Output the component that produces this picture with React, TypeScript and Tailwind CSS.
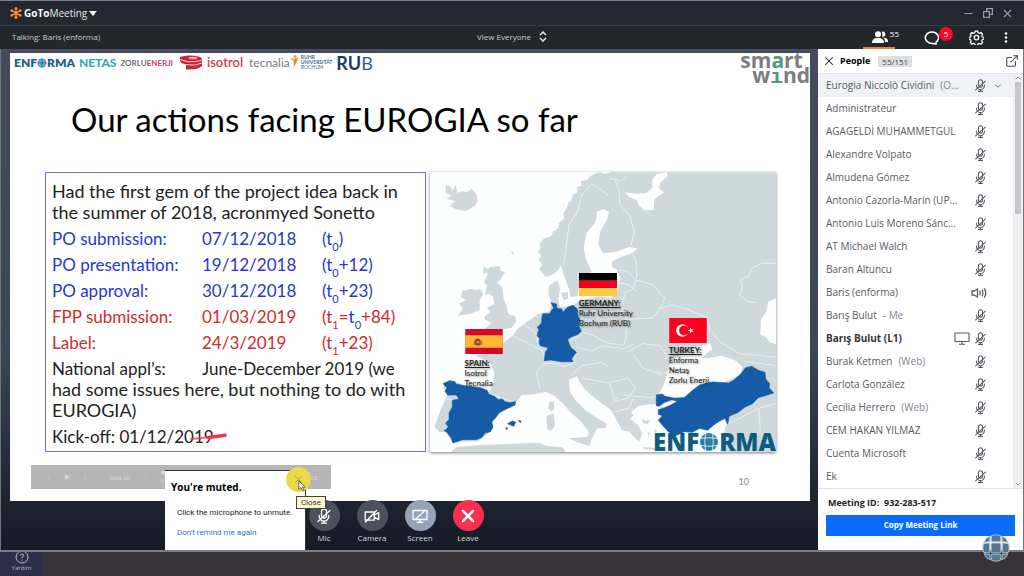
import { useState, type ReactNode } from 'react';
import { X, Minus, ChevronDown, ChevronUp, ChevronLeft, ChevronRight, Play, ExternalLink } from 'lucide-react';

type Person = {
    name: string;
    suffix?: string;
    talking?: boolean;
    sharing?: boolean;
    active?: boolean;
};

const people: Person[] = [
    { name: 'Eurogia Niccolò Cividini', suffix: '(O...', active: true },
    { name: 'Administrateur' },
    { name: 'AGAGELDİ MUHAMMETGUL' },
    { name: 'Alexandre Volpato' },
    { name: 'Almudena Gómez' },
    { name: 'Antonio Cazorla-Marín (UP...' },
    { name: 'Antonio Luis Moreno Sánc...' },
    { name: 'AT Michael Walch' },
    { name: 'Baran Altuncu' },
    { name: 'Baris (enforma)', talking: true },
    { name: 'Barış Bulut', suffix: '- Me' },
    { name: 'Barış Bulut (L1)', sharing: true },
    { name: 'Burak Ketmen', suffix: '(Web)' },
    { name: 'Carlota González' },
    { name: 'Cecilia Herrero', suffix: '(Web)' },
    { name: 'CEM HAKAN YILMAZ' },
    { name: 'Cuenta Microsoft' },
    { name: 'Ek' },
];

function MicMuted({ className }: { className?: string }) {
    return (
        <svg viewBox="0 0 16 16" className={className} fill="none" stroke="currentColor" strokeWidth="1.3" strokeLinecap="round">
            <rect x="5.5" y="1" width="5" height="9" rx="2.5" />
            <path d="M3.2 7.5v.8a4.8 4.8 0 0 0 9.6 0v-.8M8 13v2M5.5 15.2h5M2 13.5 14 2.5" />
        </svg>
    );
}

function CameraOff({ className }: { className?: string }) {
    return (
        <svg viewBox="0 0 16 16" className={className} fill="none" stroke="currentColor" strokeWidth="1.3" strokeLinejoin="round" strokeLinecap="round">
            <path d="M1.2 4h9v8.2h-9zM10.2 7.2l4.5-2.6v7l-4.5-2.6M1.5 14 12.5 2.5" />
        </svg>
    );
}

function ScreenOff({ className }: { className?: string }) {
    return (
        <svg viewBox="0 0 16 16" className={className} fill="none" stroke="currentColor" strokeWidth="1.3" strokeLinejoin="round" strokeLinecap="round">
            <path d="M1 2.5h14v9H1zM8 11.5v2.7M5 14.3h6M3.5 11.2 12.5 3" />
        </svg>
    );
}

function Monitor({ className }: { className?: string }) {
    return (
        <svg viewBox="0 0 16 13" className={className} fill="none" stroke="currentColor" strokeWidth="1.1" strokeLinejoin="round">
            <path d="M1 1h14v8.5H1zM8 9.5V12M5 12.2h6" />
        </svg>
    );
}

function Speaker({ className }: { className?: string }) {
    return (
        <svg viewBox="0 0 16 12" className={className} fill="none" stroke="currentColor" strokeWidth="1.3" strokeLinejoin="round" strokeLinecap="round">
            <path d="M1 4h2.200L6.500 2v8L3.200 8H1zM9 4.200v3.600M11.300 3.200c.7 1.700.7 3.900 0 5.600M13.500 1.800c1.500 2.500 1.500 5.900 0 8.400" />
        </svg>
    );
}

function Gear({ className }: { className?: string }) {
    return (
        <svg viewBox="0 0 24 24" className={className} fill="none" stroke="currentColor" strokeWidth="2" strokeLinejoin="round">
            <path d="M10 1.500h4l.8 3 2 .9 2.800-1.500 2.700 2.700-1.500 2.800.8 2 3 .8v0l0 0-.1 3-2.900.8-.8 2 1.500 2.800-2.700 2.700-2.800-1.500-2 .8-.8 2.700h-4l-.8-2.700-2-.8-2.800 1.500-2.700-2.700 1.500-2.800-.8-2-2.900-.8 0-3.200 3-.8.7-1.800-1.500-2.800 2.700-2.700 2.800 1.500 2-.9z" transform="translate(.4 .2) scale(.96)" />
            <circle cx="12" cy="12" r="3.600" />
        </svg>
    );
}

function Globe({ className }: { className?: string }) {
    return (
        <svg viewBox="0 0 40 40" className={className}>
            <circle cx="20" cy="20" r="18" fill="currentColor" />
            <path d="M2 13q18-3 36 0M2 27q18 3 36 0M13 2q-3 18 0 36M27 2q3 18 0 36" fill="none" stroke="#ffffff" strokeOpacity=".75" strokeWidth="2" />
        </svg>
    );
}

// ball built from nine rounded tiles, sits over the taskbar edge
function Watermark() {
    return (
        <svg viewBox="0 0 40 40" className="h-7 w-7">
            <g fill="#527793" stroke="#b9c9d5" strokeWidth="1.200">
                <path d="M12 3q-7 2-9 9 4-1 8-1 0-4 1-8zM28 3q7 2 9 9-4-1-8-1 0-4-1-8zM12 37q-7-2-9-9 4 1 8 1 0 4 1 8zM28 37q7-2 9-9-4 1-8 1 0 4-1 8z" />
                <path d="M14 2q6-1.500 12 0 1 4 1 9H13q0-5 1-9zM14 38q6 1.500 12 0 1-4 1-9H13q0 5 1 9zM2 14q-1.500 6 0 12 4 1 9 1V13q-5 0-9 1zM38 14q1.500 6 0 12-4 1-9 1V13q5 0 9 1z" />
                <rect x="13" y="13" width="14" height="14" rx="2" />
            </g>
        </svg>
    );
}

function Flower() {
    return (
        <svg viewBox="0 0 20 20" className="h-3 w-3" stroke="#f68d2e" strokeWidth="2.600" strokeLinecap="round">
            <path d="M10 10V2M10 10v8M10 10 3 6M10 10l7 4M10 10l7-4M10 10l-7 4" />
            <g fill="#f68d2e" stroke="none">
                <circle cx="10" cy="2.500" r="2.300" />
                <circle cx="10" cy="17.500" r="2.300" />
                <circle cx="3" cy="6" r="2.300" />
                <circle cx="17" cy="6" r="2.300" />
                <circle cx="3" cy="14" r="2.300" />
                <circle cx="17" cy="14" r="2.300" />
            </g>
        </svg>
    );
}

function TitleBar() {
    return (
        <header className="flex h-[26px] items-center justify-between border-t border-b border-t-[#7b7e84] border-b-[#3a3d46] bg-[#23272f] px-2.5 text-white">
            <button className="flex items-center gap-0.5 text-[10px]">
                <Flower />
                <span className="text-gray-200"><b className="text-white">GoTo</b>Meeting</span>
                <svg viewBox="0 0 8 5" className="h-[5px] w-[8px]"><path d="M0 0h8L4 5z" fill="#fff" /></svg>
            </button>
            <div className="flex items-center gap-2 text-[#9a9da3]">
                <button aria-label="Minimize"><Minus size={13} strokeWidth={2} /></button>
                <button aria-label="Restore">
                    <svg viewBox="0 0 10 10" className="h-[10px] w-[10px]" fill="none" stroke="currentColor" strokeWidth="1.2">
                        <path d="M.6 3.600h5.800v5.800H.600zM3.600 3.500V.6h5.800v5.800H6.500" />
                    </svg>
                </button>
                <button aria-label="Close window"><X size={13} strokeWidth={2} /></button>
            </div>
        </header>
    );
}

function StatusBar() {
    return (
        <div className="grid h-[23px] grid-cols-[1fr_auto_1fr] items-center bg-[#23272d] px-3 text-[8px] leading-[21px] text-[#c9cbd0]">
            <span className="pb-0.5">Talking: Baris (enforma)</span>
            <button className="flex items-center gap-2 pb-0.5">
                View Everyone
                <svg viewBox="0 0 8 11" className="h-[11px] w-[8px]" fill="none" stroke="#e5e5e5" strokeWidth="1.500">
                    <path d="M1 4l3-3 3 3M1 7l3 3 3-3" />
                </svg>
            </button>
            <div className="flex h-full items-center justify-end pr-1 text-white">
                <button aria-label="People" className="flex h-full w-8 items-center justify-end border-b-2 border-[#e08440]">
                    <svg viewBox="0 0 16 12" className="h-[12px] w-[16px] shrink-0" fill="currentColor">
                        <circle cx="6" cy="3.200" r="3" />
                        <path d="M0 12c0-4 2.500-5 6-5s6 1 6 5z" />
                        <path d="M9.500.7a2.700 2.700 0 1 1 .3 5A5 5 0 0 0 9.500.7zM12 6.600c2.600.3 4 1.500 4 4.400h-3c0-2-.3-3.300-1.600-4.300z" />
                    </svg>
                    <span className="-mr-1 ml-0.5 pb-1.5 leading-3">55</span>
                </button>
                <button aria-label="Chat" className="mr-4 ml-7 flex items-center">
                    <svg viewBox="0 0 16 14" className="h-[14px] w-[16px]" fill="none" stroke="currentColor" strokeWidth="1.500">
                        <path d="M13 11.200A6.600 5.700 0 1 0 9 12.400l4.200.5z" strokeLinejoin="round" />
                    </svg>
                    <span className="mb-2 flex h-[14px] w-[14px] items-center justify-center rounded-full bg-[#fa0a2a]">5</span>
                </button>
                <button aria-label="Settings" className="mr-5"><Gear className="h-[15px] w-[15px]" /></button>
                <button aria-label="More">
                    <svg viewBox="0 0 4 12" className="h-[11px] w-[4px]" fill="currentColor">
                        <circle cx="2" cy="1.700" r="1.400" />
                        <circle cx="2" cy="6" r="1.400" />
                        <circle cx="2" cy="10.300" r="1.400" />
                    </svg>
                </button>
            </div>
        </div>
    );
}

function Enforma({ big = false }: { big?: boolean }) {
    return (
        <span className={`flex items-center leading-none font-extrabold ${big ? 'text-[24px] text-[#0d5c82]' : 'text-[12px] text-[#1b5f8c]'}`}>
            ENF
            <Globe className={big ? 'h-5 w-5 text-[#2a7fa8]' : 'h-[10px] w-[10px] text-[#2a7fa8]'} />
            RMA
        </span>
    );
}

function Partners() {
    return (
        <div className="flex h-9 items-start justify-between pl-1">
            <div className="flex h-[19px] items-center">
                <Enforma />
                <span className="ml-1 text-[12px] font-bold text-[#1aa7b3]">NETAS</span>
                <span className="ml-1 text-[8px] font-bold text-[#6d6e71]">ZORLU<span className="text-[#d0416f]">ENERJI</span></span>
                <svg viewBox="0 0 24 15" className="ml-1.5 h-[15px] w-6">
                    <path d="M1 2q5-2 11-1.500Q23 1 23 4v7q-4 4-16 3.500V9Q1 9 1 5z" fill="#cf2338" />
                    <path d="M1 4.500Q9 8 17 6.500T23 4M7 9.500q9 2 16-1.500" fill="none" stroke="#fff" strokeWidth=".8" />
                    <ellipse cx="14" cy="3" rx="4.500" ry="1.300" fill="#f1a6ae" />
                </svg>
                <span className="ml-1 text-[13px] font-semibold text-[#d63a51]">isotrol</span>
                <span className="ml-1.5 text-[12px] text-[#77787b]">tecnalia</span>
                <svg viewBox="0 0 9 15" className="h-[15px] w-[9px]">
                    <path d="M0 3q5 2 8-1-1 6-5 12 2-7 0-9-2 0-3-2z" fill="#f08a1d" />
                    <circle cx="5" cy="1.500" r="1.300" fill="#f08a1d" />
                </svg>
                <span className="ml-0.5 text-[5px] leading-[5px] text-[#3f6d8f]"><b>RUHR<br />UNIVERSITÄT</b><br />BOCHUM</span>
                <span className="ml-1 text-[18px] leading-none text-[#2d6187]"><b className="text-[#12416b]">RU</b>B</span>
            </div>
            <div className="font-['Open_Sans',sans-serif] text-[21px] leading-[15px] font-bold text-[#7b7d7e]">
                <div>sm<span className="text-[#4c9b80]">a</span>rt</div>
                <div className="pl-3">w<span className="font-['Liberation_Mono',monospace] text-[#4c9b80]">ı</span>nd</div>
            </div>
        </div>
    );
}

function Sub({ children }: { children: ReactNode }) {
    return <sub className="bottom-0 align-[-6px] text-[11px] leading-none">{children}</sub>;
}

const milestones = [
    { label: 'PO submission:', date: '07/12/2018', offset: <>(t<Sub>0</Sub>)</>, color: 'text-[#2a34d8]' },
    { label: 'PO presentation:', date: '19/12/2018', offset: <>(t<Sub>0</Sub>+12)</>, color: 'text-[#2a34d8]' },
    { label: 'PO approval:', date: '30/12/2018', offset: <>(t<Sub>0</Sub>+23)</>, color: 'text-[#2a34d8]' },
    { label: 'FPP submission:', date: '01/03/2019', offset: <>(t<Sub>1</Sub>=<span className="text-[#2a34d8]">t<Sub>0</Sub></span>+84)</>, color: 'text-[#d32a2a]' },
    { label: 'Label:', date: '24/3/2019', offset: <>(t<Sub>1</Sub>+23)</>, color: 'text-[#d32a2a]' },
];

function Milestones() {
    return (
        <div className="flex flex-col gap-[5px] border border-[#6c6ee8] pt-2 pb-1 pl-1.5 text-[17px] leading-[21px] whitespace-nowrap text-[#222]">
            <p className="text-[18px]">Had the first gem of the project idea back in<br />the summer of 2018, acronmyed Sonetto</p>
            {milestones.map((m) => (
                <div key={m.label} className={`grid h-[21px] grid-cols-[150px_120px_1fr] ${m.color}`}>
                    <span>{m.label}</span>
                    <span>{m.date}</span>
                    <span>{m.offset}</span>
                </div>
            ))}
            <p className="text-[18px]">
                <span className="inline-block w-[150px] text-[17px]">National appl’s:</span><span className="text-[17px]">June-December 2019 (we</span><br />
                had some issues here, but nothing to do with<br />
                EUROGIA)
            </p>
            <p className="flex items-center">
                <span>Kick-off: 01/12/2019</span>
                <svg viewBox="0 0 38 8" className="-ml-6 h-2 w-[38px]">
                    <path d="M1 6Q14 5 35 2" fill="none" stroke="#f0364a" strokeWidth="2" strokeLinecap="round" strokeOpacity=".7" />
                    <path d="M18 4.500L35 2.300" fill="none" stroke="#f0364a" strokeWidth="3.500" strokeLinecap="round" />
                </svg>
            </p>
        </div>
    );
}

function EuropeMap() {
    return (
        <svg viewBox="15 21 1038 840" className="absolute inset-0 h-full w-full" preserveAspectRatio="none">
            <rect x="15" y="21" width="1038" height="840" fill="#fdfefe" />
            <g fill="#cfd9dc">
                {/* Iceland */}
                <path d="M62 60L78 66 82 78 92 60 98 84 112 78 124 82 140 72 156 90 158 108 150 122 124 138 92 132 74 122 90 108 64 102 80 92 62 84z" />
                {/* Great Britain and Ireland */}
                <path d="M176 305L188 311 182 325 174 327zM196 306L226 302 226 316 240 322 226 344 216 354 232 366 236 400 246 428 250 446 270 454 274 470 260 488 230 494 200 492 176 502 168 500 200 474 180 464 178 454 196 442 186 428 208 418 204 394 188 386 180 390 186 360 176 352 188 330 184 318z" />
                <path d="M112 378L138 372 156 376 164 372 176 386 164 406 164 434 136 446 98 452 114 430 102 416 122 406 108 396z" />
                <path d="M258 262l8-4-2 12zM348 243l4-6 2 8z" />
                {/* continent */}
                <path d="M1053 21H560L540 26 520 21 495 34 488 44 468 48 470 62 456 66 456 84 442 90 440 108 430 112 424 132 414 146 418 160 402 174 400 190 384 200 378 214 358 220 342 236 348 248 338 262 350 272 340 285 352 298 342 312 362 336 376 332 398 318 408 300 418 335 432 372 436 396 456 394 462 368 472 345 500 320 484 285 476 250 484 205 512 172 516 140 535 132 552 140 546 165 525 200 520 240 535 265 575 260 612 246 638 250 620 265 582 278 560 290 562 308 575 312 586 340 575 385 555 400 520 394 500 400 465 404 440 425 405 425 400 405 405 372 398 345 372 362 370 390 380 415 372 440 345 445 328 455 310 468 280 490 262 512 240 530 215 545 202 560 150 572 195 592 208 620 205 662 190 684 130 665 90 650 60 652 56 668 68 685 60 705 45 740 28 785 45 802 62 800 82 832 160 828 196 800 206 765 226 740 270 715 290 690 330 688 362 680 388 692 412 715 440 745 470 772 492 802 484 824 500 822 516 790 542 790 545 776 510 755 480 735 455 710 435 680 432 645 455 634 475 668 500 692 530 715 558 735 575 765 590 795 612 800 642 832 652 805 638 778 615 762 640 735 690 725 700 800 760 800 850 790 895 765 900 790 885 861H1053z" />
                <path d="M408 384l20-4 2 20-14 6zM372 712l14-4 2 24-10 8-8-10zM364 752l22-6 4 36-12 16-12-6zM430 820l50-4 20 4-6 24-36-12zM78 861l16-14 60-6 90-4 60-2 40-2 20 10 50 4 8 14zM652 848l50 2 4 8-40-2z" />
            </g>
            {/* inner seas */}
            <g fill="#fdfefe">
                <path d="M600 82L630 86 664 84 682 68 682 44 696 26 724 21 728 33 706 53 702 69 716 83 696 97 688 102 686 134 660 136 642 122 636 106 612 96z" />
                <path d="M738 588L772 566 802 552 854 534 862 552 830 578 848 580 888 572 928 584 952 606 948 628 880 660 840 680 778 696 744 696 700 690 716 660z" />
                <path d="M1053 400L1030 410 1024 440 1008 462 1006 508 1022 516 1034 532 1053 538z" />
                <path d="M640 722L700 716 740 800 838 790 902 760 906 778 890 806 886 861H660L652 812 654 792 628 772 632 758 618 742z" />
            </g>
            <path d="M652 760l10 8 14-2-8 12-14-4zM690 790l6 10-8 4zM668 800l8 6-6 6zM655 846l40 4 10-2-6 8-44-4z" fill="#cfd9dc" />
            {/* borders */}
            <g fill="none" stroke="#eaf0f1" strokeWidth="3" strokeLinejoin="round">
                <path d="M500 55l-30 35-12 50-26 40-8 60-8 60M500 55l30 20 22 20M568 40l16 40 0 40 30 30 14 50-10 44M552 44l16-4 18 10 18-14M582 314l26 6 24 24M575 352l34 6 26 20M635 340l-2-55-12-24M633 345l-10 26-22 12-10 35-26 12M633 345l50 14 36 40 -14 30-20 30-82 4M705 430l36-10 44 12 60 24 10 40M470 500l36 12 40 22 50 6 10-30-6-56-10-30M430 530l36-20M455 545l44 14 28-16 70 8 30-14M610 560l44-24 50 6 30 40M625 570l30 40 56 20M450 592l-30 12-42-10-24 4-20 26 12 50M300 480l34 24 6 32M262 512l60 30 30 14M345 540l14 38M440 630l30-28 60-10 22 14M470 640l40 6 40 8 60-14 22 30-22 28-40 12M555 655l14 50M595 690l80 8 40-8M625 700l-14 30-40 10M580 695l-20 22M1053 295l-40 0-30 12-12 26-24 12 4 24-8 20 26 20 24 4M860 500l24 30 60 36 109 10M965 590l88 12M1053 715l-50 14-96 50M1002 730l4 70-90 56M190 684l70 26M64 700l30 8-12 50-12 38M690 620l44 6" />
            </g>
            <g fill="#155ba6" stroke="#155ba6" strokeWidth="2" strokeLinejoin="round">
                {/* Germany */}
                <path d="M378 413L394 417 396 430 410 432 414 442 428 426 444 421 458 433 459 452 464 462 461 482 469 498 460 508 438 516 428 524 436 546 454 562 446 572 440 582 444 590 410 590 378 585 358 587 361 562 370 548 346 542 342 534 344 520 336 512 342 492 336 488 350 474 350 460 354 446 374 446 380 436 386 428z" />
                {/* Spain */}
                <path d="M54 656L74 647 90 650 92 657 118 662 166 668 186 676 192 688 208 694 220 704 232 702 240 710 256 713 272 710 270 720 244 732 222 744 212 758 200 770 204 786 196 800 180 804 170 818 152 824 112 824 84 834 78 818 66 802 58 798 70 786 62 774 72 764 72 744 82 726 82 706 102 702 94 690 68 690 60 678 66 668z" />
                <path d="M248 776l14-8 10 4-6 12zM280 766l8 2-2 5zM242 788l6 1-3 5z" />
                {/* Turkey */}
                <path d="M694 690L712 687 720 694 748 700 778 698 800 678 824 660 862 651 910 654 926 646 948 626 962 608 980 604 1000 616 1020 622 1022 642 1034 656 1032 668 1046 684 1020 692 1000 698 982 716 960 726 940 742 912 754 908 778 900 760 884 768 866 780 848 796 824 790 802 802 778 800 752 812 730 800 712 780 700 766 712 752 700 748 700 734 716 730 734 722 758 708 740 704 718 712 702 724 694 722z" />
            </g>
            <path d="M704 724l18-10 24-6 6 2-14 8-22 8z" fill="#fdfefe" />
        </svg>
    );
}

function FlagEs() {
    return (
        <svg viewBox="0 0 114 76" className="mb-1 block h-[25px] w-[38px]">
            <path fill="#d4092a" d="M0 0h114v76H0z" />
            <path fill="#fdb934" d="M0 19h114v38H0z" />
            <path fill="#a3442a" d="M30 32q8-7 16 0v16q-8 6-16 0zM26 36h3v13h-3zM47 36h3v13h-3z" />
            <circle cx="39" cy="40" r="3.500" fill="#d9a08c" />
        </svg>
    );
}

function FlagDe() {
    return (
        <svg viewBox="0 0 114 69" className="mb-0.5 block h-[23px] w-[38px]">
            <path d="M0 0h114v23H0z" />
            <path fill="#f5001a" d="M0 23h114v23H0z" />
            <path fill="#ffc93c" d="M0 46h114v23H0z" />
        </svg>
    );
}

function FlagTr() {
    return (
        <svg viewBox="0 0 114 76" className="mb-0.5 block h-[25px] w-[38px]">
            <path fill="#f8021f" d="M0 0h114v76H0z" />
            <circle cx="40" cy="38" r="19" fill="#fff" />
            <circle cx="45" cy="38" r="15" fill="#f8021f" />
            <path fill="#fff" d="M57 38l6-2 1-7 4 6 6-2-4 5 4 5-6-2-4 6-1-7z" />
        </svg>
    );
}

const pins = [
    { country: 'SPAIN:', flag: <FlagEs />, lines: ['Isotrol', 'Tecnalia'], place: 'left-[10%] top-[56%]' },
    { country: 'GERMANY:', flag: <FlagDe />, lines: ['Ruhr University', 'Bochum (RUB)'], place: 'left-[43%] top-[36%]' },
    { country: 'TURKEY:', flag: <FlagTr />, lines: ['Enforma', 'Netaş', 'Zorlu Enerji'], place: 'left-[69%] top-[52%]' },
];

function Slide() {
    return (
        <section className="flex aspect-[25/14] flex-col bg-white font-['Lato',sans-serif]">
            <Partners />
            <h1 className="mt-2 ml-[61px] text-[33px] leading-[45px] whitespace-nowrap text-black">Our actions facing EUROGIA so far</h1>
            <div className="mt-[30px] mr-[34px] ml-[35px] grid grid-cols-[381fr_346fr] gap-1">
                <Milestones />
                <div className="relative shadow-[0_1px_3px_rgba(0,0,0,0.5)]">
                    <EuropeMap />
                    {pins.map((p) => (
                        <div key={p.country} className={`absolute text-[8px] leading-[10px] whitespace-nowrap text-[#222] text-shadow-[1px_1px_2px_rgba(0,0,0,0.5)] ${p.place}`}>
                            {p.flag}
                            <b className="block underline">{p.country}</b>
                            {p.lines.map((l) => <div key={l}>{l}</div>)}
                        </div>
                    ))}
                    <div className="absolute right-0 -bottom-0.5 font-['Open_Sans',sans-serif]"><Enforma big /></div>
                </div>
            </div>
            <div className="mt-[13px] mr-[61px] ml-[21px] flex items-center justify-between">
                <div className="flex h-6 w-[300px] items-center gap-3 bg-[#b5b5b5] px-3.5 text-[6px] text-[#d8d8d8]">
                    <ChevronLeft size={7} />
                    <Play size={6} fill="currentColor" />
                    <ChevronRight size={7} />
                    <span className="ml-2">Slide 10</span>
                    <ChevronDown size={6} />
                    <span className="flex flex-col items-center gap-0.5 leading-[6px]">
                        <svg viewBox="0 0 6 5" className="h-[5px] w-[6px]" fill="currentColor"><path d="M0 0h4v3H0zM3 2h3v3H3z" /></svg>
                        0:0
                    </span>
                    <span className="ml-auto">:03</span>
                </div>
                <span className="mt-2.5 text-[9px] text-[#8b8b8b]">10</span>
            </div>
        </section>
    );
}

const controls = [
    { label: 'Mic', Icon: MicMuted, bg: 'bg-[#4c515b]' },
    { label: 'Camera', Icon: CameraOff, bg: 'bg-[#4c515b]' },
    { label: 'Screen', Icon: ScreenOff, bg: 'bg-[#94a3b8]' },
    { label: 'Leave', Icon: X, bg: 'bg-[#f8304f]' },
];

function Controls() {
    return (
        <div className="flex h-12 items-start justify-center pr-[28px]">
            {controls.map(({ label, Icon, bg }) => (
                <button key={label} className="z-10 -mt-px flex w-12 flex-col items-center text-[8px] text-[#d5d8dc]">
                    <span className={`mb-px flex h-[31px] w-[31px] items-center justify-center rounded-full text-white ${bg}`}>
                        <Icon className={label === 'Leave' ? 'h-5 w-5 stroke-3' : 'h-4 w-4'} />
                    </span>
                    {label}
                </button>
            ))}
        </div>
    );
}

function MutedPopup({ onClose }: { onClose: () => void }) {
    return (
        <div className="absolute bottom-0 left-[165px] z-20 h-20 w-[141px] border-t border-r border-[#333] bg-white px-1.5 pt-2 font-['Roboto',sans-serif] text-[8px] text-[#222]">
            <p className="font-['Open_Sans',sans-serif] text-[10px] leading-4 font-bold text-black">You're muted.</p>
            <p className="mt-2.5 pl-1.5 leading-4 whitespace-nowrap">Click the microphone to unmute.</p>
            <a href="#" className="mt-1 block pl-1.5 leading-4 text-[#2678c9]">Don't remind me again</a>
            <button
                onClick={onClose}
                aria-label="Close"
                className="absolute -top-1 -right-1.5 flex h-[25px] w-[25px] items-center justify-center rounded-full bg-[#ecd94a] text-[#a29535]"
            >
                <X size={13} strokeWidth={1.5} />
            </button>
            <svg viewBox="0 0 10 15" className="absolute top-2 -right-px h-[14px] w-[8px]">
                <path d="M1 1v11l3-2.500 2 4.500 1.800-.8-2-4.400H9z" fill="#fff" stroke="#333" strokeWidth=".9" />
            </svg>
            <span className="absolute top-[25px] -right-[21px] border border-[#444] bg-[#fbf8cf] px-1 leading-[11px] text-[#333]">Close</span>
        </div>
    );
}

function PeoplePanel() {
    return (
        <aside className="flex w-[205px] flex-col bg-white">
            <div className="flex h-[25px] items-center border-b border-[#e1e3e8] pr-2 pl-1 text-[9px]">
                <button aria-label="Close people"><X size={14} strokeWidth={1.8} className="text-[#222]" /></button>
                <b className="ml-1 text-black">People</b>
                <span className="ml-2 bg-[#dcdfe4] px-1 text-[8px] leading-[11px] text-[#444]">55/151</span>
                <button aria-label="Pop out" className="ml-auto"><ExternalLink size={14} strokeWidth={1.8} className="-mr-1 text-[#444]" /></button>
            </div>
            <div className="flex flex-1">
                <ul className="flex-1">
                    {people.map((p) => (
                        <li key={p.name} className={`flex h-[23px] items-center pr-2 pl-2 text-[10px] whitespace-nowrap text-[#555a63] ${p.active ? 'bg-[#f0f1f6]' : ''}`}>
                            <span className={p.sharing ? 'font-bold text-[#333]' : ''}>{p.name}</span>
                            {p.suffix && <span className="ml-1.5 text-[#81868f]">{p.suffix}</span>}
                            <span className="ml-auto flex items-center gap-1">
                                {p.sharing && <Monitor className="h-[13px] w-[16px]" />}
                                {p.talking ? <Speaker className="h-3 w-4" /> : <MicMuted className="h-[13px] w-[13px]" />}
                            </span>
                            <span className="ml-1.5 w-3">{p.active && <ChevronDown size={10} />}</span>
                        </li>
                    ))}
                </ul>
                <div className="flex w-2.5 flex-col items-center bg-[#f0f0f2] text-[#555]">
                    <ChevronUp size={8} />
                    <div className="h-[132px] w-[6px] bg-[#c6c7ca]" />
                    <ChevronDown size={8} className="mt-auto" />
                </div>
            </div>
            <div className="border-t border-[#e1e3e8] px-2 pt-1.5 pb-3.5">
                <p className="px-0.5 text-[9px] leading-[15px] font-bold text-[#222]">Meeting ID: &nbsp;932-283-517</p>
                <button className="mt-0.5 h-[21px] w-full bg-[#0a6cf8] text-[8px] font-bold text-white">Copy Meeting Link</button>
            </div>
        </aside>
    );
}

export default function App() {
    const [showPopup, setShowPopup] = useState(true);

    return (
        <div className="relative min-h-screen bg-[#363436] font-['Open_Sans','Noto_Sans',sans-serif]">
            <div className="relative border-b-2 border-[#7b7f85]">
                <TitleBar />
                <StatusBar />
                <main className="flex border-x border-[#6f747d] bg-linear-to-b from-[#454a5c] via-[#3a4757] via-60% to-[#151a25]">
                    <div className="min-w-0 flex-1 pt-1 pr-2 pl-[9px]">
                        <Slide />
                        <Controls />
                    </div>
                    <PeoplePanel />
                </main>
                {showPopup && <MutedPopup onClose={() => setShowPopup(false)} />}
            </div>
            <footer className="flex h-[25px]">
                <button className="flex w-[43px] flex-col items-center bg-[#2e2e49] text-[6px] text-[#b8bac8]">
                    <svg viewBox="0 0 14 12" className="h-3 w-3.5" fill="none" stroke="currentColor">
                        <circle cx="7" cy="5" r="6" />
                        <path d="M5.200 3.700Q5.500 2 7 2t1.800 1.600Q8.800 4.700 7 5.400v1M7 7.700v1" />
                    </svg>
                    Yardım
                </button>
            </footer>
            <div className="absolute right-[14px] bottom-[15px] z-20"><Watermark /></div>
        </div>
    );
}
